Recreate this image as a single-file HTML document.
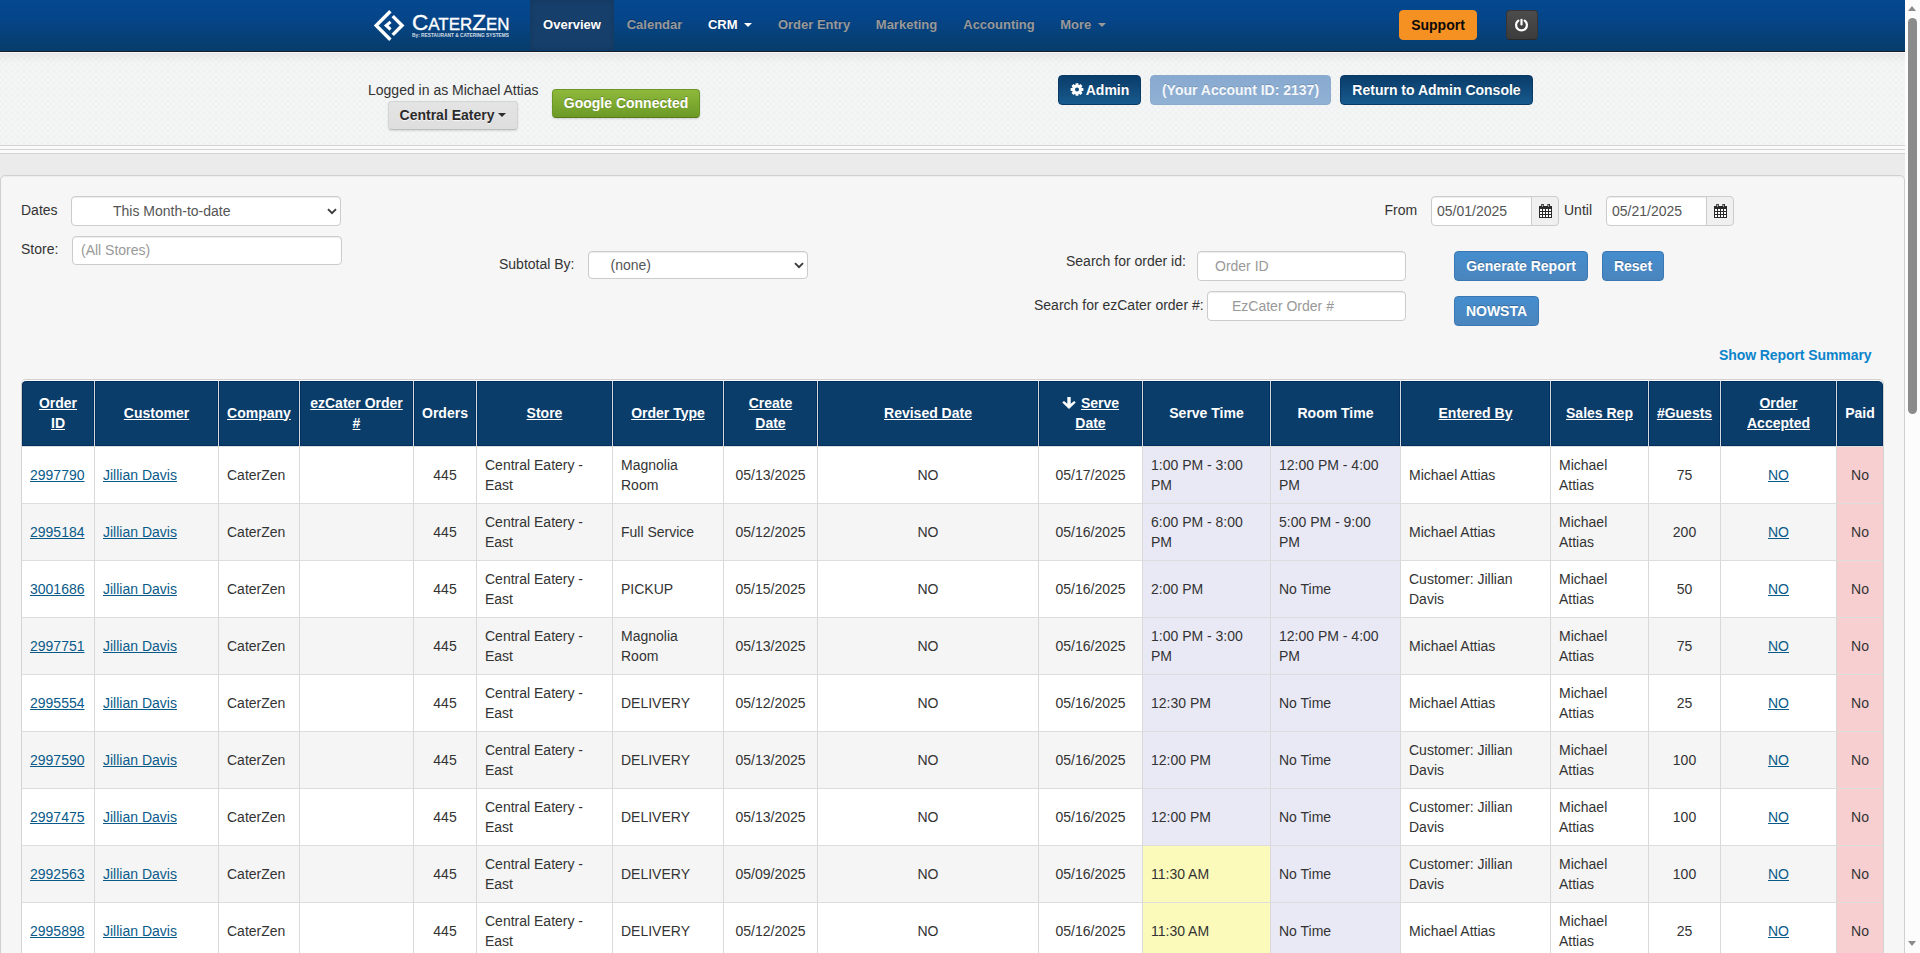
<!DOCTYPE html>
<html lang="en">
<head>
<meta charset="utf-8">
<title>CaterZen - Overview</title>
<style>
html,body{margin:0;padding:0;}
html{overflow:hidden;background:#ebebeb;}
body{width:1920px;height:953px;position:relative;overflow:hidden;font-family:"Liberation Sans",sans-serif;font-size:14px;line-height:20px;color:#333;background:#ebebeb;}
*{box-sizing:border-box;}
a{color:#095a89;text-decoration:underline;}
.abs{position:absolute;}
#page{position:absolute;left:0;top:0;width:1905px;height:953px;overflow:hidden;}

/* ---------- navbar ---------- */
#nav{position:absolute;left:0;top:0;width:1905px;height:52px;background:linear-gradient(to bottom,#05488f 0%,#05458a 35%,#063f73 80%,#073d6d 100%);border-bottom:1px solid #161d28;}
#nav .item{position:absolute;top:0;height:51px;line-height:49px;font-size:13px;font-weight:bold;color:#999;text-shadow:0 -1px 0 rgba(0,0,0,.25);white-space:nowrap;text-align:center;}
#nav .item.on{color:#fff;}
#nav .item.active{color:#fff;background:#163f6b;box-shadow:inset 0 0 6px rgba(0,0,0,.15);}
.caret{display:inline-block;width:0;height:0;border-left:4px solid transparent;border-right:4px solid transparent;border-top:4px solid currentColor;vertical-align:middle;margin-left:3px;position:relative;top:-1px;}

/* ---------- header strip ---------- */
#hdr{position:absolute;left:0;top:52px;width:1905px;height:94px;background:#f1f2f2;border-top:1px solid #f6f6f6;border-bottom:1px solid #d3d3d3;}
#rules{position:absolute;left:0;top:146px;width:1905px;height:8px;background:#fafafa;}
#rules i{position:absolute;left:0;width:100%;height:1px;background:#d3d3d3;}
.btn{position:absolute;white-space:nowrap;font-size:14px;font-weight:bold;text-align:center;border-radius:4px;height:29px;line-height:27px;border:1px solid transparent;}


/* buttons */
.b-blue{background:linear-gradient(#0a3c69,#175a8e);border-color:#0b3a66;color:#fff;text-shadow:0 -1px 0 rgba(0,0,0,.25);}
.b-lblue{background:linear-gradient(#89aad0,#90b0d4);border-color:#8aaace;color:#f3f7fb;text-shadow:0 -1px 0 rgba(0,0,0,.15);}
.b-green{background:linear-gradient(#8fb93c,#6c9a26);border-color:#6b9627 #6b9627 #557a1c;color:#fff;text-shadow:0 -1px 0 rgba(0,0,0,.25);box-shadow:0 1px 2px rgba(0,0,0,.15);}
.b-gray{background:linear-gradient(#e4e4e4,#dedede);border-color:#d4d4d4 #d4d4d4 #bdbdbd;color:#2b2b2b;text-shadow:0 1px 1px rgba(255,255,255,.75);box-shadow:0 1px 2px rgba(0,0,0,.12);}
.b-orange{background:#f59122;border-color:#f59122;color:#0a0a0a;}
.b-dark{background:linear-gradient(#4c4c4c,#3c3c3c);border-color:#353535 #353535 #2a2a2a;color:#fff;}
.b-prim{background:linear-gradient(#458dce,#4a85bd);border-color:#3a78b4;color:#fff;text-shadow:0 -1px 0 rgba(0,0,0,.25);}
.lbl{position:absolute;white-space:nowrap;font-size:14px;line-height:20px;color:#333;}
.inp{position:absolute;background:#fff;border:1px solid #ccc;border-radius:4px;box-shadow:inset 0 1px 1px rgba(0,0,0,.075);font-size:14px;line-height:28px;color:#999;white-space:nowrap;overflow:hidden;}
.inp.val{color:#555;}
.addon{position:absolute;width:28px;height:30px;background:#f0f0f0;border:1px solid #ccc;border-radius:0 4px 4px 0;}
.addon svg{position:absolute;left:7px;top:7px;}
.chev{position:absolute;right:3px;top:11px;width:10px;height:7px;}

/* ---------- well ---------- */
#well{position:absolute;left:0;top:175px;width:1905px;height:900px;background:#f6f6f6;border:1px solid #d0d0d0;border-radius:5px;box-shadow:inset 0 1px 1px rgba(0,0,0,.04);}


/* ---------- table ---------- */
#tbl{position:absolute;width:1863px;table-layout:fixed;border-collapse:separate;border-spacing:0;border:1px solid #d2d2d2;border-left:0;border-radius:5px 5px 0 0;background:#fff;font-size:14px;line-height:20px;}
#tbl th,#tbl td{border-left:1px solid #d9d9d9;border-top:1px solid #ddd;padding:0 8px;vertical-align:middle;text-align:left;overflow:hidden;}
#tbl th{height:66px;padding-bottom:2px !important;border-top:1px solid #fff;background:#0b3d6b;box-shadow:inset 0 0 0 1px #032f5e;color:#fff;font-weight:bold;text-align:center;padding:0 4px;border-left-color:#d3dbe1;}
#tbl th:first-child{border-top-left-radius:5px;border-left-color:#cdcdcd;}
#tbl td:first-child{border-left-color:#d4d4d4;}
#tbl th:last-child{border-top-right-radius:5px;}
#tbl th a{color:#fff;text-decoration:underline;}
#tbl td{height:57px;}
#tbl td.c{text-align:center;}
#tbl tr.even td{background:#f5f5f5;}
#tbl tr td.lav{background:#e9e9f6;}
#tbl tr td.yel{background:#fcfabb;}
#tbl tr td.pink{background:#f7cfd1;}
.arr{vertical-align:-1px;margin-right:5px;}

/* ---------- scrollbar ---------- */
#sb{position:absolute;left:1905px;top:0;width:15px;height:953px;background:#fcfcfc;}
#sb .thumb{position:absolute;left:3px;top:18px;width:9px;height:396px;border-radius:5px;background:#8b8b8b;}
#sb .up,#sb .dn{position:absolute;left:3px;width:0;height:0;border-left:4.5px solid transparent;border-right:4.5px solid transparent;}
#sb .up{top:6px;border-bottom:5px solid #8b8b8b;}
#sb .dn{top:941px;border-top:5px solid #8b8b8b;}
</style>
</head>
<body>
<div id="page">

<div id="nav">
  <svg class="abs" style="left:368px;top:4px;" width="150" height="44" viewBox="368 4 150 44">
    <g fill="none" stroke="#fff" stroke-width="3.4" stroke-linejoin="miter" stroke-linecap="butt">
      <polyline points="390.4,11.2 376.2,25.5 390.4,39.7"/>
      <polyline points="392.7,16.1 402.1,25.5 392.7,34.9"/>
    </g>
    <polygon fill="#fff" points="383.9,25.5 389.6,20.8 391.6,22.9 388.6,25.4 391.6,28.3 389.6,30.8"/>
    <text x="412" y="30" fill="#fff" stroke="#fff" stroke-width="0.35" font-family="Liberation Sans, sans-serif" font-size="16.8" textLength="97.5" lengthAdjust="spacingAndGlyphs"><tspan font-size="22.4">C</tspan>ATER<tspan font-size="22.4">Z</tspan>EN</text>
    <text x="412" y="37" fill="#fff" font-family="Liberation Sans, sans-serif" font-size="4.6" font-weight="bold" opacity=".82" textLength="97" lengthAdjust="spacingAndGlyphs">By: RESTAURANT &amp; CATERING SYSTEMS</text>
  </svg>
  <div class="item active" style="left:530px;width:84px;height:50px;">Overview</div>
  <div class="item" style="left:614px;width:81px;">Calendar</div>
  <div class="item on" style="left:695px;width:70px;">CRM <span class="caret"></span></div>
  <div class="item" style="left:765px;width:98px;">Order Entry</div>
  <div class="item" style="left:863px;width:87px;">Marketing</div>
  <div class="item" style="left:950px;width:98px;">Accounting</div>
  <div class="item" style="left:1048px;width:70px;">More <span class="caret"></span></div>
  <div class="btn b-orange" style="left:1399px;top:10px;width:78px;height:30px;line-height:28px;">Support</div>
  <div class="btn b-dark" style="left:1506px;top:10px;width:32px;height:30px;">
    <svg class="abs" style="left:6.800px;top:5.500px;" width="15" height="16" viewBox="0 0 15 16"><path d="M4.300 3.700 A5.400 5.400 0 1 0 10.700 3.700" fill="none" stroke="#fff" stroke-width="2.200" stroke-linecap="round"/><line x1="7.500" y1="2.800" x2="7.500" y2="7.400" stroke="#fff" stroke-width="2.200" stroke-linecap="round"/></svg>
  </div>
</div>

<div id="hdr">
  <svg class="abs" style="left:0;top:0;" width="1905" height="92"><defs><pattern id="tx" width="6" height="6" patternUnits="userSpaceOnUse"><rect width="6" height="6" fill="#f4f5f5"/><path d="M0 0l6 6M6 0l-6 6" stroke="#eaebec" stroke-width="1" opacity=".55"/><rect x="2.500" y="2.500" width="1" height="1" fill="#f7f8f8"/></pattern><linearGradient id="txs" x1="0" y1="0" x2="0" y2="1"><stop offset="0" stop-color="#000" stop-opacity=".045"/><stop offset=".12" stop-color="#000" stop-opacity="0"/></linearGradient></defs><rect width="1905" height="92" fill="url(#tx)"/><rect width="1905" height="92" fill="url(#txs)"/></svg>
  <div class="lbl" style="left:368px;top:27px;">Logged in as Michael Attias</div>
  <div class="btn b-gray" style="left:388px;top:48px;width:130px;">Central Eatery<span class="caret" style="margin-left:4px;"></span></div>
  <div class="btn b-green" style="left:552px;top:36px;width:148px;">Google Connected</div>
  <div class="btn b-blue" style="left:1058px;top:22px;width:83px;height:30px;line-height:28px;"><svg width="14" height="13" viewBox="0 0 14 13" style="vertical-align:-1px;margin-right:2px;position:relative;top:-0.500px;"><path fill="#fff" fill-rule="evenodd" d="M11.78 5.05L13.35 5.11L13.35 7.89L11.78 7.95L11.41 8.86L12.47 10.00L10.50 11.97L9.36 10.91L8.45 11.28L8.39 12.85L5.61 12.85L5.55 11.28L4.64 10.91L3.50 11.97L1.53 10.00L2.59 8.86L2.22 7.95L0.65 7.89L0.65 5.11L2.22 5.05L2.59 4.14L1.53 3.00L3.50 1.03L4.64 2.09L5.55 1.72L5.61 0.15L8.39 0.15L8.45 1.72L9.36 2.09L10.50 1.03L12.47 3.00L11.41 4.14ZM5.00 6.50a2.00 2.00 0 1 0 4.00 0a2.00 2.00 0 1 0 -4.00 0Z"/></svg>Admin</div>
  <div class="btn b-lblue" style="left:1150px;top:22px;width:181px;height:30px;line-height:28px;">(Your Account ID: 2137)</div>
  <div class="btn b-blue" style="left:1340px;top:22px;width:193px;height:30px;line-height:28px;">Return to Admin Console</div>
</div>
<div id="rules"><i style="top:3px"></i><i style="top:7px"></i></div>

<div id="well">
  <div class="lbl" style="left:20px;top:24px;">Dates</div>
  <div class="inp val" style="left:70px;top:20px;width:270px;height:30px;padding-left:41px;color:#555;">This Month-to-date<svg class="chev" viewBox="0 0 10 7"><path d="M1 1.2l4 4 4-4" fill="none" stroke="#3a3a3a" stroke-width="1.9"/></svg></div>
  <div class="lbl" style="left:20px;top:63px;">Store:</div>
  <div class="inp" style="left:71px;top:60px;width:270px;height:29px;line-height:27px;padding-left:8px;">(All Stores)</div>

  <div class="lbl" style="left:498px;top:78px;">Subtotal By:</div>
  <div class="inp val" style="left:587px;top:75px;width:220px;height:28px;line-height:26px;padding-left:21.500px;color:#555;font-size:14px;">(none)<svg class="chev" style="top:10px;" viewBox="0 0 10 7"><path d="M1 1.2l4 4 4-4" fill="none" stroke="#3a3a3a" stroke-width="1.9"/></svg></div>

  <div class="lbl" style="left:1383.5px;top:24px;">From</div>
  <div class="inp val" style="left:1430px;top:20px;width:101px;height:30px;padding-left:5px;border-radius:4px 0 0 4px;">05/01/2025</div>
  <div class="addon" style="left:1530px;top:20px;"><svg width="13" height="14" viewBox="0 0 13 14"><path fill="#2a2a2a" d="M0 2h13v12H0z"/><path fill="#2a2a2a" d="M2.200 0h2.600v3.500h-2.600zM8.400 0h2.600v3.500h-2.600z"/><path fill="#cfd8cf" d="M3.100 0.800h0.800v2h-0.800zM9.300 0.800h0.800v2h-0.800z"/><path fill="#fff" d="M1 5h2v2H1zM4 5h2v2H4zM7 5h2v2H7zM10 5h2v2h-2zM1 8h2v2H1zM4 8h2v2H4zM7 8h2v2H7zM10 8h2v2h-2zM1 11h2v2H1zM4 11h2v2H4zM7 11h2v2H7zM10 11h2v2h-2z"/></svg></div>
  <div class="lbl" style="left:1563px;top:24px;">Until</div>
  <div class="inp val" style="left:1605px;top:20px;width:101px;height:30px;padding-left:5px;border-radius:4px 0 0 4px;">05/21/2025</div>
  <div class="addon" style="left:1705px;top:20px;"><svg width="13" height="14" viewBox="0 0 13 14"><path fill="#2a2a2a" d="M0 2h13v12H0z"/><path fill="#2a2a2a" d="M2.200 0h2.600v3.500h-2.600zM8.400 0h2.600v3.500h-2.600z"/><path fill="#cfd8cf" d="M3.100 0.800h0.800v2h-0.800zM9.300 0.800h0.800v2h-0.800z"/><path fill="#fff" d="M1 5h2v2H1zM4 5h2v2H4zM7 5h2v2H7zM10 5h2v2h-2zM1 8h2v2H1zM4 8h2v2H4zM7 8h2v2H7zM10 8h2v2h-2zM1 11h2v2H1zM4 11h2v2H4zM7 11h2v2H7zM10 11h2v2h-2z"/></svg></div>

  <div class="lbl" style="left:1065px;top:75px;">Search for order id:</div>
  <div class="inp" style="left:1196px;top:75px;width:209px;height:30px;padding-left:17px;">Order ID</div>
  <div class="lbl" style="left:1033px;top:119px;">Search for ezCater order #:</div>
  <div class="inp" style="left:1206px;top:115px;width:199px;height:30px;padding-left:24px;">EzCater Order #</div>

  <div class="btn b-prim" style="left:1453px;top:75px;width:134px;height:30px;line-height:28px;">Generate Report</div>
  <div class="btn b-prim" style="left:1601px;top:75px;width:62px;height:30px;line-height:28px;">Reset</div>
  <div class="btn b-prim" style="left:1453px;top:120px;width:85px;height:30px;line-height:28px;">NOWSTA</div>

  <div class="lbl" style="left:1718px;top:169px;font-weight:bold;color:#0b84cb;letter-spacing:-0.080px;">Show Report Summary</div>

<!--TBL-->
<table id="tbl" style="left:20px;top:203px;">
<colgroup><col style="width:73px"><col style="width:124px"><col style="width:81px"><col style="width:114px"><col style="width:63px"><col style="width:136px"><col style="width:111px"><col style="width:94px"><col style="width:221px"><col style="width:104px"><col style="width:128px"><col style="width:130px"><col style="width:150px"><col style="width:98px"><col style="width:72px"><col style="width:116px"><col style="width:47px"></colgroup>
<thead><tr><th><a>Order<br>ID</a></th><th><a>Customer</a></th><th><a>Company</a></th><th><a>ezCater Order<br>#</a></th><th>Orders</th><th><a>Store</a></th><th><a>Order Type</a></th><th><a>Create<br>Date</a></th><th><a>Revised Date</a></th><th><svg class="arr" width="14" height="12" viewBox="0 0 13.200 11.800"><path fill="#fff" d="M4.960 0H8.260V6.600L11.800 4.000L13.200 5.300L6.600 11.800L0 5.300L1.650 4.000L4.960 6.600Z"/></svg><a>Serve<br>Date</a></th><th>Serve Time</th><th>Room Time</th><th><a>Entered By</a></th><th><a>Sales Rep</a></th><th><a>#Guests</a></th><th><a>Order<br>Accepted</a></th><th>Paid</th></tr></thead>
<tbody>
<tr class="odd"><td><a>2997790</a></td><td><a>Jillian Davis</a></td><td>CaterZen</td><td></td><td class="c">445</td><td>Central Eatery -<br>East</td><td>Magnolia<br>Room</td><td class="c">05/13/2025</td><td class="c">NO</td><td class="c">05/17/2025</td><td class="lav">1:00 PM - 3:00<br>PM</td><td class="lav">12:00 PM - 4:00<br>PM</td><td>Michael Attias</td><td>Michael<br>Attias</td><td class="c">75</td><td class="c"><a>NO</a></td><td class="c pink">No</td></tr>
<tr class="even"><td><a>2995184</a></td><td><a>Jillian Davis</a></td><td>CaterZen</td><td></td><td class="c">445</td><td>Central Eatery -<br>East</td><td>Full Service</td><td class="c">05/12/2025</td><td class="c">NO</td><td class="c">05/16/2025</td><td class="lav">6:00 PM - 8:00<br>PM</td><td class="lav">5:00 PM - 9:00<br>PM</td><td>Michael Attias</td><td>Michael<br>Attias</td><td class="c">200</td><td class="c"><a>NO</a></td><td class="c pink">No</td></tr>
<tr class="odd"><td><a>3001686</a></td><td><a>Jillian Davis</a></td><td>CaterZen</td><td></td><td class="c">445</td><td>Central Eatery -<br>East</td><td>PICKUP</td><td class="c">05/15/2025</td><td class="c">NO</td><td class="c">05/16/2025</td><td class="lav">2:00 PM</td><td class="lav">No Time</td><td>Customer: Jillian<br>Davis</td><td>Michael<br>Attias</td><td class="c">50</td><td class="c"><a>NO</a></td><td class="c pink">No</td></tr>
<tr class="even"><td><a>2997751</a></td><td><a>Jillian Davis</a></td><td>CaterZen</td><td></td><td class="c">445</td><td>Central Eatery -<br>East</td><td>Magnolia<br>Room</td><td class="c">05/13/2025</td><td class="c">NO</td><td class="c">05/16/2025</td><td class="lav">1:00 PM - 3:00<br>PM</td><td class="lav">12:00 PM - 4:00<br>PM</td><td>Michael Attias</td><td>Michael<br>Attias</td><td class="c">75</td><td class="c"><a>NO</a></td><td class="c pink">No</td></tr>
<tr class="odd"><td><a>2995554</a></td><td><a>Jillian Davis</a></td><td>CaterZen</td><td></td><td class="c">445</td><td>Central Eatery -<br>East</td><td>DELIVERY</td><td class="c">05/12/2025</td><td class="c">NO</td><td class="c">05/16/2025</td><td class="lav">12:30 PM</td><td class="lav">No Time</td><td>Michael Attias</td><td>Michael<br>Attias</td><td class="c">25</td><td class="c"><a>NO</a></td><td class="c pink">No</td></tr>
<tr class="even"><td><a>2997590</a></td><td><a>Jillian Davis</a></td><td>CaterZen</td><td></td><td class="c">445</td><td>Central Eatery -<br>East</td><td>DELIVERY</td><td class="c">05/13/2025</td><td class="c">NO</td><td class="c">05/16/2025</td><td class="lav">12:00 PM</td><td class="lav">No Time</td><td>Customer: Jillian<br>Davis</td><td>Michael<br>Attias</td><td class="c">100</td><td class="c"><a>NO</a></td><td class="c pink">No</td></tr>
<tr class="odd"><td><a>2997475</a></td><td><a>Jillian Davis</a></td><td>CaterZen</td><td></td><td class="c">445</td><td>Central Eatery -<br>East</td><td>DELIVERY</td><td class="c">05/13/2025</td><td class="c">NO</td><td class="c">05/16/2025</td><td class="lav">12:00 PM</td><td class="lav">No Time</td><td>Customer: Jillian<br>Davis</td><td>Michael<br>Attias</td><td class="c">100</td><td class="c"><a>NO</a></td><td class="c pink">No</td></tr>
<tr class="even"><td><a>2992563</a></td><td><a>Jillian Davis</a></td><td>CaterZen</td><td></td><td class="c">445</td><td>Central Eatery -<br>East</td><td>DELIVERY</td><td class="c">05/09/2025</td><td class="c">NO</td><td class="c">05/16/2025</td><td class="lav yel">11:30 AM</td><td class="lav">No Time</td><td>Customer: Jillian<br>Davis</td><td>Michael<br>Attias</td><td class="c">100</td><td class="c"><a>NO</a></td><td class="c pink">No</td></tr>
<tr class="odd"><td><a>2995898</a></td><td><a>Jillian Davis</a></td><td>CaterZen</td><td></td><td class="c">445</td><td>Central Eatery -<br>East</td><td>DELIVERY</td><td class="c">05/12/2025</td><td class="c">NO</td><td class="c">05/16/2025</td><td class="lav yel">11:30 AM</td><td class="lav">No Time</td><td>Michael Attias</td><td>Michael<br>Attias</td><td class="c">25</td><td class="c"><a>NO</a></td><td class="c pink">No</td></tr>
</tbody></table>
<!--/TBL-->
</div>

</div>
<div id="sb"><div class="up"></div><div class="thumb"></div><div class="dn"></div></div>
</body>
</html>
